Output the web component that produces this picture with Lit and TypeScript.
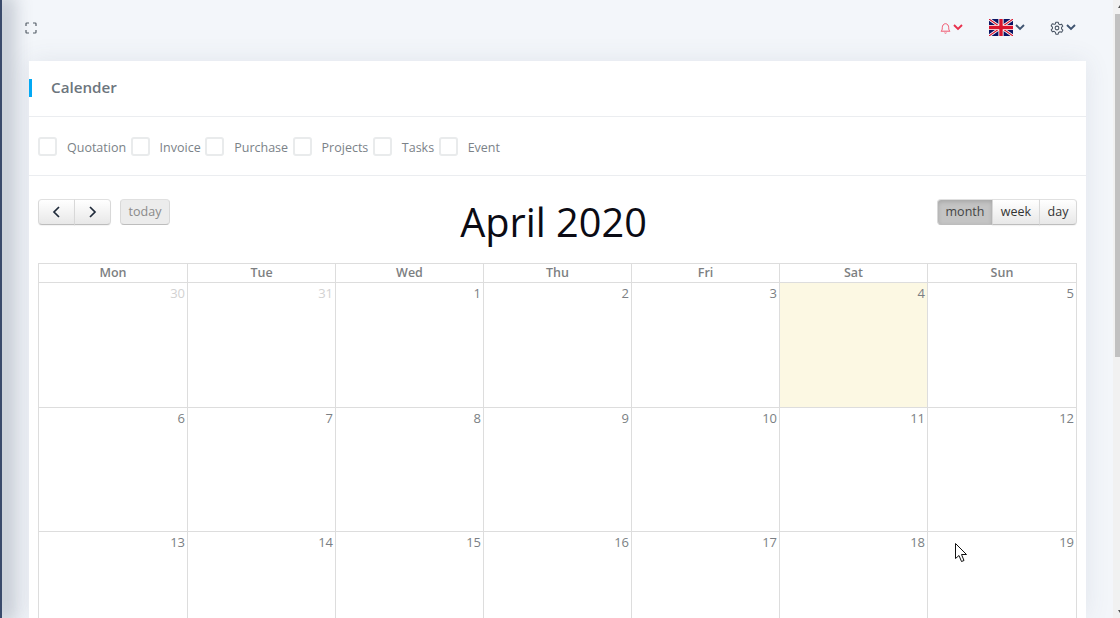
import { LitElement, html, css, svg } from "lit";
import { customElement } from "lit/decorators.js";

const FILTERS = ["Quotation", "Invoice", "Purchase", "Projects", "Tasks", "Event"];
const DAYS = ["Mon", "Tue", "Wed", "Thu", "Fri", "Sat", "Sun"];
const WEEKS = [
  [30, 31, 1, 2, 3, 4, 5],
  [6, 7, 8, 9, 10, 11, 12],
  [13, 14, 15, 16, 17, 18, 19],
];

const chevron = (color: string) => svg`
  <svg class="chev" width="10" height="7" viewBox="0 0 10 7" fill="none" stroke=${color} stroke-width="1.9">
    <path d="M1 1l4 4 4-4" />
  </svg>`;

@customElement("app-root")
export class AppRoot extends LitElement {
  static styles = css`
    :host {
      display: block;
      position: relative;
      height: 618px;
      overflow: hidden;
      font-family: "Open Sans", sans-serif;
      background: #f3f6fa;
      color: #6c757d;
    }
    .page {
      display: flex;
      height: 618px;
    }
    .rail {
      width: 2px;
      flex-shrink: 0;
      background: #3a4a6b;
      box-shadow: 3px 0 20px 6px rgba(70, 80, 105, 0.42);
    }
    .main {
      flex: 1;
      min-width: 0;
      padding: 0 27px;
    }
    .scrollbar {
      width: 7px;
      flex-shrink: 0;
      background: #f1f1f1;
      position: relative;
      overflow: hidden;
    }
    .scrollbar::before,
    .scrollbar::after {
      content: "";
      position: absolute;
      right: -2px;
      border-left: 2.5px solid transparent;
      border-right: 2.5px solid transparent;
    }
    .scrollbar::before {
      top: 5px;
      border-bottom: 3px solid #505050;
    }
    .scrollbar::after {
      bottom: 5px;
      border-top: 3px solid #505050;
    }
    .thumb {
      position: absolute;
      top: 14px;
      left: 2px;
      right: 0;
      height: 343px;
      background: #c1c1c1;
    }
    .topbar {
      height: 61px;
      display: flex;
      align-items: center;
      padding-bottom: 6px;
      box-sizing: border-box;
    }
    .expand {
      margin-left: -4px;
    }
    .actions {
      margin-left: auto;
      display: flex;
      align-items: center;
      margin-right: 10px;
    }
    .action {
      display: flex;
      align-items: center;
      gap: 2px;
    }
    .bell { margin-right: 26px; }
    .lang { margin-right: 25px; gap: 2px; }
    .card {
      background: #fff;
      height: 557px;
      overflow: hidden;
      box-shadow: 0 0 24px rgba(70, 80, 105, 0.1);
    }
    .card-title {
      height: 51px;
      padding: 0 0 4px 22px;
      border-bottom: 1px solid #ebedf0;
      display: flex;
      align-items: center;
      font-size: 15.2px;
      font-weight: 600;
      color: #6c757d;
      position: relative;
    }
    .card-title::before {
      content: "";
      position: absolute;
      left: 0;
      top: 18px;
      width: 3px;
      height: 18px;
      background: #03a9f4;
    }
    .filters {
      height: 58px;
      border-bottom: 1px solid #ebedf0;
      display: flex;
      align-items: center;
      padding-left: 9px;
      font-size: 12.5px;
      color: #7b8288;
    }
    .filter {
      display: flex;
      align-items: center;
    }
    .box {
      width: 15px;
      height: 15px;
      border: 2px solid #e9ebec;
      border-radius: 3px;
      margin-right: 10px;
    }
    .filter span {
      margin-right: 4.5px;
      padding-top: 2px;
    }
    .cal {
      padding: 23px 9px 0;
    }
    .toolbar {
      height: 64px;
      display: flex;
      align-items: flex-start;
      justify-content: space-between;
    }
    .left {
      display: flex;
    }
    .group {
      display: flex;
    }
    .btn {
      height: 26px;
      box-sizing: border-box;
      display: flex;
      align-items: center;
      justify-content: center;
      padding: 0 0 2px;
      font-size: 12.5px;
      color: #333;
      border: 1px solid #d2d2d2;
      border-color: #e0e0e0 #d8d8d8 #bdbdbd;
      background: linear-gradient(#fff, #e8e8e8);
      box-shadow: inset 0 1px 0 rgba(255, 255, 255, 0.2), 0 1px 1px rgba(0, 0, 0, 0.05);
    }
    .group .btn + .btn { margin-left: -1px; }
    .group .btn:first-child { border-radius: 4px 0 0 4px; }
    .group .btn:last-child { border-radius: 0 4px 4px 0; }
    .arrow { width: 37px; padding: 0; }
    .today {
      margin-left: 9px;
      width: 50px;
      border-radius: 4px;
      background: #ececec;
      color: #8a8a8a;
      box-shadow: none;
    }
    .month { width: 56px; }
    .week { width: 48px; }
    .day { width: 38px; }
    .active {
      background: #c4c4c4;
      color: #444;
      box-shadow: inset 0 2px 4px rgba(0, 0, 0, 0.15);
    }
    h2 {
      margin: 0;
      font-size: 39.7px;
      font-weight: 400;
      line-height: 47px;
      color: #0b0b14;
    }
    .grid {
      display: grid;
      grid-template-columns: 150px repeat(5, 148px) 149px;
      border-top: 1px solid #ddd;
    }
    .head {
      height: 18px;
      line-height: 17px;
      text-align: center;
      font-size: 12.5px;
      font-weight: 600;
      color: #7d7f82;
      border-bottom: 1px solid #ddd;
      border-right: 1px solid #ddd;
    }
    .cell {
      border-bottom: 1px solid #ddd;
      border-right: 1px solid #ddd;
      text-align: right;
      padding: 1px 2px 0 0;
      font-size: 13px;
      line-height: 18px;
      color: #7b7f84;
      box-sizing: border-box;
      height: 124.5px;
    }
    .head:nth-child(7n + 1),
    .cell:nth-child(7n + 1) {
      border-left: 1px solid #ddd;
    }
    .other { color: #d2d2d2; }
    .now { background: #fcf8e3; }
    .cursor {
      position: absolute;
      left: 955px;
      top: 543px;
    }
  `;

  render() {
    return html`
      <div class="page">
        <div class="rail"></div>
        <div class="main">
          <div class="topbar">
            <svg class="expand" width="12" height="12" viewBox="0 0 12 12" fill="none" stroke="#555e68" stroke-width="1.2">
              <path d="M1 4V1.8q0-.8.8-.8H4M8 1h2.2q.8 0 .8.8V4M11 8v2.2q0 .8-.8.8H8M4 11H1.8q-.8 0-.8-.8V8" />
            </svg>
            <div class="actions">
              <div class="action bell">
                <svg width="11" height="12" viewBox="0 0 11 12" fill="none" stroke="#f1576f" stroke-width="1">
                  <path d="M1 9.2h9c-1-.9-1.3-1.6-1.3-3.6 0-2-1.2-3.9-3.2-3.9S2.300 3.600 2.300 5.600c0 2-.3 2.700-1.300 3.600z" />
                  <path d="M4.500 10.800q1 .8 2 0" />
                </svg>
                ${chevron("#e8304c")}
              </div>
              <div class="action lang">
                <svg width="24" height="17" viewBox="0 0 24 17">
                  <rect width="24" height="17" fill="#0a1464" />
                  <path d="M0 0l24 17M24 0L0 17" stroke="#fff" stroke-width="2.800" />
                  <path d="M0 0l24 17M24 0L0 17" stroke="#d8142c" stroke-width="1.100" />
                  <path d="M12 0v17M0 8.500h24" stroke="#fff" stroke-width="5.200" />
                  <path d="M12 0v17M0 8.500h24" stroke="#d8142c" stroke-width="3.400" />
                </svg>
                ${chevron("#3f5470")}
              </div>
              <div class="action">
                <svg width="14" height="14" viewBox="0 0 24 24" fill="none" stroke="#4a5564" stroke-width="1.800" stroke-linejoin="round">
                  <circle cx="12" cy="12" r="3.200" />
                  <path d="M10 2h4l.7 3 2.300 1.300 3-.9 2 3.500-2.200 2.100v2.600l2.200 2.100-2 3.500-3-.9-2.300 1.300-.7 3h-4l-.7-3L7 17.700l-3 .9-2-3.500 2.200-2.100v-2.600L2 8.300l2-3.500 3 .9L9.300 5z" />
                </svg>
                ${chevron("#3f5470")}
              </div>
            </div>
          </div>
          <div class="card">
            <div class="card-title">Calender</div>
            <div class="filters">
              ${FILTERS.map(
                (name) => html`<label class="filter"><i class="box"></i><span>${name}</span></label>`,
              )}
            </div>
            <div class="cal">
              <div class="toolbar">
                <div class="left">
                  <div class="group">
                    <div class="btn arrow">
                      <svg width="9" height="12" viewBox="0 0 9 12" fill="none" stroke="#1f2a3a" stroke-width="1.700"><path d="M7 1L2 6l5 5" /></svg>
                    </div>
                    <div class="btn arrow">
                      <svg width="9" height="12" viewBox="0 0 9 12" fill="none" stroke="#1f2a3a" stroke-width="1.700"><path d="M2 1l5 5-5 5" /></svg>
                    </div>
                  </div>
                  <div class="btn today">today</div>
                </div>
                <h2>April 2020</h2>
                <div class="group">
                  <div class="btn month active">month</div>
                  <div class="btn week">week</div>
                  <div class="btn day">day</div>
                </div>
              </div>
              <div class="grid">
                ${DAYS.map((d) => html`<div class="head">${d}</div>`)}
                ${WEEKS.map((week, w) =>
                  week.map(
                    (n) => html`<div class="cell ${w === 0 && n >= 30 ? "other" : ""} ${w === 0 && n === 4 ? "now" : ""}">${n}</div>`,
                  ),
                )}
              </div>
            </div>
          </div>
        </div>
        <div class="scrollbar"><div class="thumb"></div></div>
      </div>
      <svg class="cursor" width="13" height="20" viewBox="0 0 13 20" fill="#fff" stroke="#111" stroke-width="1">
        <path d="M.5.5v15l3.500-3 2.500 6 2.500-1-2.500-6h5z" />
      </svg>
    `;
  }
}
